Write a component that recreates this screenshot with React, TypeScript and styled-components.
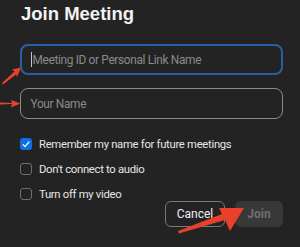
import React from "react";
import styled, { createGlobalStyle } from "styled-components";

const Global = createGlobalStyle`
  html, body { margin: 0; padding: 0; background: #232323; }
  * { box-sizing: border-box; }
`;

const Dialog = styled.div`
  position: relative;
  width: 300px;
  height: 247px;
  background: #232323;
  padding: 0 17px 0 20px;
  display: flex;
  flex-direction: column;
  font-family: Roboto, "Liberation Sans", Arial, sans-serif;
  overflow: hidden;
`;

const Title = styled.h1`
  margin: 2px 0 0 1px;
  font-family: "Liberation Sans", Arial, sans-serif;
  font-size: 18.5px;
  line-height: 24px;
  font-weight: 700;
  color: #f2f2f2;
`;

const Field = styled.div<{ $focused?: boolean; $mt: number }>`
  margin-top: ${(p) => p.$mt}px;
  height: 31px;
  border-radius: 8px;
  border: ${(p) => (p.$focused ? "2px solid #2a5fa8" : "1.5px solid #8c8c8c")};
  display: flex;
  align-items: center;
  padding-left: ${(p) => (p.$focused ? 8.5 : 9.5)}px;
  font-size: 11.9px;
  letter-spacing: -0.35px;
  color: #8a8a8a;
`;

const Caret = styled.span`
  display: inline-block;
  width: 1px;
  height: 15px;
  background: #c8c8c8;
  margin-right: 1px;
`;

const Options = styled.div`
  margin-top: 19px;
  display: flex;
  flex-direction: column;
  gap: 13px;
`;

const Row = styled.div`
  display: flex;
  align-items: center;
  height: 12px;
  gap: 7px;
  font-size: 11.3px;
  letter-spacing: -0.3px;
  color: #e6e6e6;
`;

const Box = styled.span<{ $checked?: boolean }>`
  width: 12px;
  height: 12px;
  border-radius: 3px;
  flex: none;
  display: flex;
  align-items: center;
  justify-content: center;
  background: ${(p) => (p.$checked ? "#0e6fe0" : "transparent")};
  border: ${(p) => (p.$checked ? "none" : "1px solid #6e6e6e")};
`;

const Buttons = styled.div`
  margin-top: 1px;
  display: flex;
  justify-content: flex-end;
  gap: 10px;
`;

const Button = styled.div<{ $primary?: boolean }>`
  height: 26px;
  width: ${(p) => (p.$primary ? 48 : 60)}px;
  border-radius: 6px;
  display: flex;
  align-items: center;
  justify-content: center;
  font-size: 12px;
  font-weight: ${(p) => (p.$primary ? 700 : 400)};
  color: ${(p) => (p.$primary ? "#6f6f6f" : "#f0f0f0")};
  background: ${(p) => (p.$primary ? "#383838" : "transparent")};
  border: ${(p) => (p.$primary ? "none" : "1px solid #777")};
`;

const Arrows = styled.svg`
  position: absolute;
  left: 0;
  top: 0;
  pointer-events: none;
`;

const Check = () => (
  <svg width="8" height="7" viewBox="0 0 8 7">
    <path d="M1 3.6 L3 5.6 L7 1" fill="none" stroke="#fff" strokeWidth="1.2" strokeLinecap="round" strokeLinejoin="round" />
  </svg>
);

export default function App() {
  return (
    <>
      <Global />
      <Dialog>
        <Title>Join Meeting</Title>
        <Field $focused $mt={18}>
          <Caret />
          Meeting ID or Personal Link Name
        </Field>
        <Field $mt={13}>Your Name</Field>
        <Options>
          <Row>
            <Box $checked>
              <Check />
            </Box>
            Remember my name for future meetings
          </Row>
          <Row>
            <Box />
            Don't connect to audio
          </Row>
          <Row>
            <Box />
            Turn off my video
          </Row>
        </Options>
        <Buttons>
          <Button>Cancel</Button>
          <Button $primary>Join</Button>
        </Buttons>
        <Arrows width="300" height="247" viewBox="0 0 300 247">
          <path d="M2 83 L3 84.5 L16 74.5 L17 77 L21 67.5 L12 69.5 L14.5 71.5 Z" fill="#e8402b" />
          <path d="M0 102.5 L0 104.5 L12 104 L11 107.5 L20.5 103.5 L11 100 L12 103 Z" fill="#e8402b" />
          <path d="M178 231 L179 233.5 L225 220 L230 231 L244 208 L219 208 L222 214 Z" fill="#e8402b" />
        </Arrows>
      </Dialog>
    </>
  );
}
